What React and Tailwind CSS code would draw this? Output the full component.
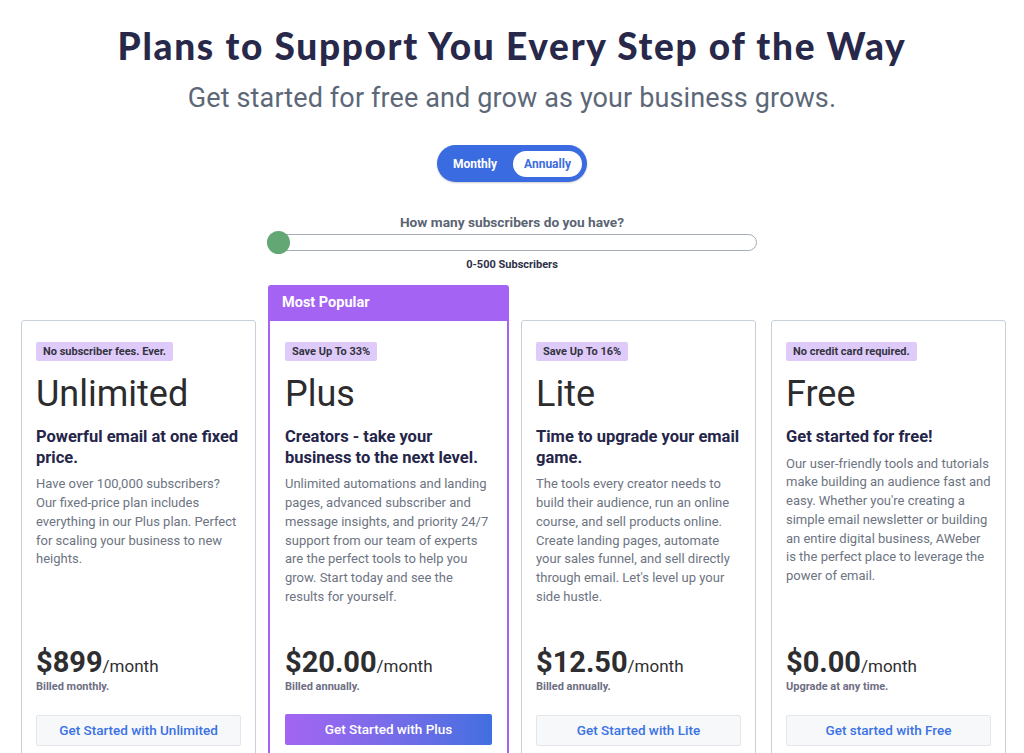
const plans = [
  {
    badge: "No subscriber fees. Ever.",
    name: "Unlimited",
    heading: "Powerful email at one fixed price.",
    body: "Have over 100,000 subscribers? Our fixed-price plan includes everything in our Plus plan. Perfect for scaling your business to new heights.",
    price: "$899",
    note: "Billed monthly.",
    cta: "Get Started with Unlimited",
  },
  {
    badge: "Save Up To 33%",
    name: "Plus",
    heading: "Creators - take your business to the next level.",
    body: "Unlimited automations and landing pages, advanced subscriber and message insights, and priority 24/7 support from our team of experts are the perfect tools to help you grow. Start today and see the results for yourself.",
    price: "$20.00",
    note: "Billed annually.",
    cta: "Get Started with Plus",
    popular: true,
  },
  {
    badge: "Save Up To 16%",
    name: "Lite",
    heading: "Time to upgrade your email game.",
    body: "The tools every creator needs to build their audience, run an online course, and sell products online. Create landing pages, automate your sales funnel, and sell directly through email. Let's level up your side hustle.",
    price: "$12.50",
    note: "Billed annually.",
    cta: "Get Started with Lite",
  },
  {
    badge: "No credit card required.",
    name: "Free",
    heading: "Get started for free!",
    body: "Our user-friendly tools and tutorials make building an audience fast and easy. Whether you're creating a simple email newsletter or building an entire digital business, AWeber is the perfect place to leverage the power of email.",
    price: "$0.00",
    note: "Upgrade at any time.",
    cta: "Get started with Free",
  },
];

function PlanBody({ plan }) {
  return (
    <div className="flex flex-1 flex-col">
      <div>
        <span className="inline-block h-[19px] rounded-[2px] bg-[#dfcbfa] px-[7px] text-[11px] font-bold leading-[19px] text-[#333340]">
          {plan.badge}
        </span>
      </div>
      <h2 className="mt-[11px] text-[36px] font-normal leading-[42px] text-[#2c2c2e]">{plan.name}</h2>
      <h3 className="mt-[12px] text-[16.5px] font-bold leading-[20.7px] text-[#25254a]">{plan.heading}</h3>
      <p className="mt-[7px] text-[13px] leading-[18.75px] text-[#6d7482]">{plan.body}</p>
      <div className="mt-auto">
        <div className="flex items-baseline text-[#2e2e30]">
          <span className="text-[29px] font-bold leading-[29px]">{plan.price}</span>
          <span className="text-[17px] leading-[29px]">/month</span>
        </div>
        <div className="mt-[-1px] text-[11px] font-bold leading-[14px] text-[#6e6e84]">{plan.note}</div>
        {plan.popular ? (
          <button className="mt-[20px] h-[31px] w-full rounded-[2px] bg-gradient-to-r from-[#a365f2] to-[#3f6fe0] text-[13.5px] font-medium text-white">
            {plan.cta}
          </button>
        ) : (
          <button className="mt-[21px] h-[31px] w-full rounded-[2px] border border-[#e3e7ec] bg-[#f6f8fa] text-[13.5px] font-medium text-[#3b72e4]">
            {plan.cta}
          </button>
        )}
      </div>
    </div>
  );
}

export default function App() {
  return (
    <div className="h-[753px] w-full overflow-hidden bg-white font-['Roboto',sans-serif]">
      <h1 className="pt-[24px] text-center font-['Lato',sans-serif] text-[37px] font-black leading-[44px] tracking-[1.7px] text-[#28284a]">
        Plans to Support You Every Step of the Way
      </h1>
      <p className="mt-[14px] text-center text-[27px] font-normal leading-[32px] tracking-[0.12px] text-[#5c6878]">
        Get started for free and grow as your business grows.
      </p>

      <div className="mt-[31px] flex justify-center">
        <div className="flex h-[37px] w-[150px] items-center rounded-full bg-[#3b6be0] pr-[5px] shadow-[0_1px_2px_rgba(0,0,0,0.2)]">
          <span className="flex-1 text-center text-[12px] font-bold text-white">Monthly</span>
          <span className="flex h-[26px] w-[69px] items-center justify-center rounded-full bg-white text-[12px] font-bold text-[#3b6be0]">
            Annually
          </span>
        </div>
      </div>

      <div className="mt-[31px] flex flex-col items-center">
        <div className="text-[13.7px] font-bold leading-[18px] text-[#5b6472]">How many subscribers do you have?</div>
        <div className="relative mt-[3px] h-[17px] w-[490px] rounded-full border-[1.5px] border-[#a3acb7] bg-white">
          <div className="absolute left-[-1px] top-[-4px] h-[23px] w-[23px] rounded-full bg-[#63a874]" />
        </div>
        <div className="mt-[7px] text-[11px] font-bold leading-[14px] text-[#2f3048]">0-500 Subscribers</div>
      </div>

      <div className="mt-[13px] flex items-start pl-[21px]">
        <div className="mt-[35px] flex h-[446px] w-[235px] flex-col rounded-[3px] border border-[#c8d0d9] px-[14px] pb-[19px] pt-[17px]">
          <PlanBody plan={plans[0]} />
        </div>
        <div className="ml-[12px] flex h-[482px] w-[241px] flex-col rounded-[3px] border-2 border-[#a463f2]">
          <div className="h-[34px] bg-[#a463f2] px-[12px] text-[14.5px] font-bold leading-[32px] text-white">Most Popular</div>
          <div className="flex flex-1 flex-col px-[15px] pb-[20px] pt-[17px]">
            <PlanBody plan={plans[1]} />
          </div>
        </div>
        <div className="ml-[12px] mt-[35px] flex h-[446px] w-[235px] flex-col rounded-[3px] border border-[#c8d0d9] px-[14px] pb-[19px] pt-[17px]">
          <PlanBody plan={plans[2]} />
        </div>
        <div className="ml-[15px] mt-[35px] flex h-[446px] w-[235px] flex-col rounded-[3px] border border-[#c8d0d9] px-[14px] pb-[19px] pt-[17px]">
          <PlanBody plan={plans[3]} />
        </div>
      </div>
    </div>
  );
}
